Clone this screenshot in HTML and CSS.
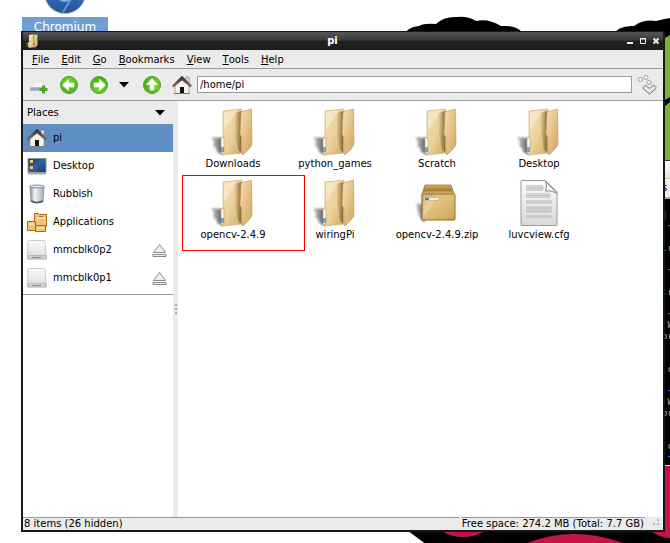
FILE: index.html
```
<!DOCTYPE html>
<html lang="en">
<head>
  <meta charset="UTF-8" />
  <meta name="viewport" content="width=device-width, initial-scale=1.0" />
  <title>pi</title>
  <link rel="stylesheet" href="styles.css">
</head>
<body>
  <!-- shared icons -->
  <svg class="defs" aria-hidden="true">
    <defs>
      <linearGradient id="gold" x1="0" y1="0" x2="1" y2="1"><stop offset="0" stop-color="#f7e0b0"/><stop offset=".55" stop-color="#ecd099"/><stop offset="1" stop-color="#d0a865"/></linearGradient>
      <linearGradient id="flap" x1="0" y1="0" x2="1" y2="1"><stop offset="0" stop-color="#f8e0af"/><stop offset="1" stop-color="#d2a460"/></linearGradient>
      <linearGradient id="dark" x1="0" y1="0" x2="1" y2="0"><stop offset="0" stop-color="#9a7b48" stop-opacity="0"/><stop offset="1" stop-color="#765b31"/></linearGradient>
      <linearGradient id="shade" x1="0" y1="0" x2="1" y2="0"><stop offset="0" stop-color="#777" stop-opacity=".4"/><stop offset="1" stop-color="#555"/></linearGradient>
      <linearGradient id="box" x1="0" y1="0" x2="1" y2="1"><stop offset="0" stop-color="#d0ad64"/><stop offset=".4" stop-color="#e3c583"/><stop offset="1" stop-color="#c7a04e"/></linearGradient>
      <linearGradient id="lid" x1="0" y1="0" x2="0" y2="1"><stop offset="0" stop-color="#d9b566"/><stop offset=".15" stop-color="#a57c2e"/><stop offset=".26" stop-color="#dbbd7d"/></linearGradient>
      <linearGradient id="paper" x1="0" y1="0" x2="0" y2="1"><stop offset="0" stop-color="#fbfbfb"/><stop offset="1" stop-color="#d9d9d9"/></linearGradient>
      <linearGradient id="metal" x1="0" y1="0" x2="1" y2="0"><stop offset="0" stop-color="#8793a0"/><stop offset=".35" stop-color="#f4f6f8"/><stop offset="1" stop-color="#a3adb8"/></linearGradient>
      <linearGradient id="screen" x1="0" y1="0" x2="1" y2="1"><stop offset="0" stop-color="#163c6c"/><stop offset=".5" stop-color="#2d5f9b"/><stop offset="1" stop-color="#163c6c"/></linearGradient>
      <linearGradient id="roof" x1="0" y1="0" x2="0" y2="1"><stop offset="0" stop-color="#222"/><stop offset="1" stop-color="#a08572"/></linearGradient>
      <radialGradient id="green" cx=".5" cy=".3" r=".7"><stop offset="0" stop-color="#7fd42f"/><stop offset="1" stop-color="#45b015"/></radialGradient>
      <linearGradient id="blue" x1="0" y1="0" x2="0" y2="1"><stop offset="0" stop-color="#4c84cc"/><stop offset="1" stop-color="#245299"/></linearGradient>
      <filter id="soft"><feGaussianBlur stdDeviation="1"/></filter>
    </defs>
    <symbol id="folder" viewBox="0 0 48 48">
      <path d="M2 29l12 1v17L8 44l-1-4-3-2 1-4z" fill="url(#shade)" filter="url(#soft)"/>
      <path d="M14 3L33 1v44l-20 2-1-16 2-3z" fill="url(#gold)" stroke="#c7a46a" stroke-width=".6"/>
      <path d="M15 4l13-2-13 21z" fill="#fff" opacity=".35"/>
      <path d="M25 6q2-2 7-3v41q-4-1-4-8l-2-9z" fill="url(#dark)" opacity=".85"/>
      <path d="M32 4L42.500 1l.5 34q0 3-3 6l-6 6-1-1V30l-2-4z" fill="url(#flap)" stroke="#c1934f" stroke-width=".6"/>
      <rect x="12" y="30" width="3" height="15" fill="#f5f5f5" stroke="#b79c6c" stroke-width=".5"/>
      <rect x="12" y="39" width="3" height="5" fill="#6fa2d9"/>
    </symbol>
    <symbol id="zip" viewBox="0 0 48 48">
      <path d="M3 24l9 2v17l-4-2-3-8z" fill="url(#shade)" filter="url(#soft)"/>
      <path d="M12 6h26l3 9v25H9V15z" fill="url(#lid)" stroke="#8d6c2d" stroke-width=".7"/>
      <rect x="9" y="15" width="33" height="26" rx="1" fill="url(#box)" stroke="#94712b"/>
      <path d="M12 18h13L11 36z" fill="#fff" opacity=".25"/>
      <rect x="11" y="18.500" width="15" height="3" rx="1" fill="#f3f0e8" stroke="#b59a5d" stroke-width=".5"/>
      <path d="M12 20h4" stroke="#3b82cf" stroke-width="2"/>
    </symbol>
    <symbol id="file" viewBox="0 0 48 48">
      <path d="M7 1.500h23l12 11v33q0 1-1 1H7q-1 0-1-1v-43q0-1 1-1z" fill="url(#paper)" stroke="#999"/>
      <path d="M11 6h17v6H11zM11 14h24v5H11zM11 21h26v4H11zM11 27h26v7H11zM11 36h26v3H11z" fill="#ccc" opacity=".8"/>
      <path d="M11 9h18M11 16.500h25M11 23h24M11 29h25M11 32h23M11 38h25" stroke="#c2c2c2"/>
      <path d="M30.500 2q2 5 0 10 5-1 11 2z" fill="#f8f8f8" stroke="#888"/>
    </symbol>
    <symbol id="home" viewBox="0 0 20 20">
      <path d="M14 2h3v7h-3z" fill="#e8e1dc" stroke="#85776e" stroke-width=".6"/>
      <path d="M3 10l7-6 7 6v8.500H3z" fill="#f7f3ef" stroke="#8b827b" stroke-width=".7"/>
      <path d="M10 1L.5 10.500l1 1.500L10 5l8.500 7 1-1.500z" fill="url(#roof)" stroke="#4a3d35" stroke-width=".6"/>
      <path d="M8 12h4v6.500H8z" fill="#17120f"/>
      <path d="M2 18.500h16" stroke="#81776f"/>
    </symbol>
    <symbol id="arrow" viewBox="0 0 20 20">
      <circle cx="10" cy="10" r="8.500" fill="url(#green)" stroke="#4aa324"/>
      <path d="M3.500 10L9.500 4.500v3.500H15v4H9.500v3.500z" fill="#fff" stroke="#e6f7da" stroke-width=".8"/>
    </symbol>
    <symbol id="drive" viewBox="0 0 20 20">
      <path d="M2 .5h15q1 0 1 1L19.500 17v2H.5V15l.5-13.500q0-1 1-1z" fill="url(#paper)" stroke="#c0c0c0" stroke-width=".8"/>
      <path d="M1 15.500h18v3.500H1z" fill="#d0d0d0" stroke="#a8a8a8" stroke-width=".6"/>
      <path d="M5 17.500h9" stroke="#888"/>
    </symbol>
    <symbol id="eject" viewBox="0 0 15 15">
      <path d="M7.500 1.500L1.500 9.500h12z" fill="#eee" stroke="#8c8c8c"/>
      <path d="M1 11.500h13v2H1z" fill="#eee" stroke="#8c8c8c"/>
    </symbol>
  </svg>

  <!-- desktop wallpaper -->
  <svg class="wallpaper" viewBox="0 0 670 543" preserveAspectRatio="xMaxYMin slice" aria-hidden="true">
    <path d="M403 36q4-9 16-10 5-3 17-2 8-8 22-7 9-1 18 4 12-3 25 5 15-1 21 6v8H403zM612 36q6-11 22-10 10-7 22-5 8-2 14-3v150h-58z"/>
    <path d="M665 38l5-3v62l-5 3zM665 106l5-4v60h-5z" fill="#7bb32e"/>
    <path d="M404 528q11 8 23 17h243v-80h-10v67z"/>
    <path d="M665 466h5v72q-10 0-19-7h14zM441 531h44q-22 12-44 0zM522 545q52-22 106 0z" fill="#c51448"/>
  </svg>

  <div class="launcher">
    <svg class="launcher-icon" viewBox="0 0 42 42" aria-hidden="true">
      <circle cx="21" cy="21" r="20.500" fill="url(#blue)" stroke="#9db9dd"/>
      <circle cx="21" cy="21" r="9" fill="#83aee5"/>
      <path d="M27 27l-8 13" stroke="#6597d7" stroke-width="2"/>
    </svg>
    <span class="launcher-name">Chromium</span>
  </div>

  <!-- terminal behind the file manager -->
  <div class="terminal">
    <div class="terminal-title"></div>
    <div class="terminal-menu">s</div>
    <pre class="terminal-text">
|
 <b>~</b>

.r
 
 <b>~</b>

.r

 <b>~</b>
 W
or


 c

 <b>~</b>
 W
or


 c
 <b>~</b></pre>
  </div>

  <main class="window">
    <header class="titlebar">
      <svg class="title-icon" aria-hidden="true"><use href="#folder"/></svg>
      <h1>pi</h1>
      <div class="controls">
        <button aria-label="Minimise"><svg viewBox="0 0 8 8"><path d="M1 6h6" stroke="#eee" stroke-width="2"/></svg></button>
        <button aria-label="Maximise"><svg viewBox="0 0 8 8"><path d="M1.500 1.500h5v5h-5zM1 2h6" fill="none" stroke="#eee"/></svg></button>
        <button aria-label="Close"><svg viewBox="0 0 8 8"><path d="M1.500 1.500l5 5M6.500 1.500l-5 5" stroke="#eee" stroke-width="2"/></svg></button>
      </div>
    </header>

    <nav class="menubar">
      <button><u>F</u>ile</button>
      <button><u>E</u>dit</button>
      <button><u>G</u>o</button>
      <button><u>B</u>ookmarks</button>
      <button><u>V</u>iew</button>
      <button><u>T</u>ools</button>
      <button><u>H</u>elp</button>
    </nav>

    <div class="toolbar">
      <button aria-label="New tab">
        <svg class="icon" viewBox="0 0 20 20"><path d="M4 7h10l2 6H2z" fill="#f3f5f8" stroke="#d2d6dc" stroke-width=".6"/><path d="M1 12h16v4H1z" fill="#b1bac8"/><path d="M1 14h12" stroke="#8e99aa"/><path d="M14.500 10.500v8M10.500 14.500h8" stroke="#4fa52b" stroke-width="3"/></svg>
      </button>
      <button aria-label="Back"><svg class="icon"><use href="#arrow"/></svg></button>
      <button aria-label="Forward"><svg class="icon right"><use href="#arrow"/></svg></button>
      <button class="history" aria-label="History"><svg viewBox="0 0 10 6"><path d="M0 0h10L5 5.500z"/></svg></button>
      <button aria-label="Up"><svg class="icon up"><use href="#arrow"/></svg></button>
      <button aria-label="Home"><svg class="icon"><use href="#home"/></svg></button>
      <input class="path" type="text" value="/home/pi" aria-label="Location">
      <button aria-label="Go to location">
        <svg class="icon" viewBox="0 0 20 20"><g fill="#fff" stroke="#999"><circle cx="3.500" cy="4.500" r="2"/><circle cx="9" cy="2.500" r="2"/><circle cx="12" cy="7.500" r="2"/></g><path d="M6 12.500l2.500-2.500 4 3.500 4-3.500L19 12.500v1l-6.500 5.500L6 13.500z" fill="#ddd" stroke="#777"/><path d="M8 12.500l4.500 3.500 4.500-3.500" stroke="#fff" fill="none"/></svg>
      </button>
    </div>

    <div class="content">
      <aside class="sidebar">
        <button class="places-head">Places <svg viewBox="0 0 10 6"><path d="M0 0h10L5 5.500z"/></svg></button>
        <ul class="places">
          <li class="selected"><svg class="icon"><use href="#home"/></svg><a href="#pi">pi</a></li>
          <li>
            <svg class="icon" viewBox="0 0 20 20"><path d="M1 2.500h18v14H1z" fill="url(#screen)" stroke="#8b9299"/><path d="M1 17.500h18" stroke="#aaa" stroke-width="2"/><path d="M3 4h3v3H3zM3 10h3v3H3z" fill="#f2c36c"/></svg>
            <a href="#desktop">Desktop</a>
          </li>
          <li>
            <svg class="icon" viewBox="0 0 20 20"><path d="M3 2.500l1 15q6 3 12 0l1-15z" fill="url(#metal)" stroke="#73808e" stroke-width=".7"/><ellipse cx="10" cy="2.500" rx="7.500" ry="1.500" fill="#dce1e6" stroke="#6f7c8a" stroke-width=".8"/><path d="M4 17q6 3 12 0" fill="none" stroke="#44566b" stroke-width="1.500"/></svg>
            <a href="#rubbish">Rubbish</a>
          </li>
          <li>
            <svg class="icon" viewBox="0 0 20 20"><g fill="#eec277" stroke="#a9680e"><path d="M7.500 1.500h4l1 1h7v12h-12z"/><path d="M12 4.500h4"/><path d="M.5 9.500h8v9h-8z"/><path d="M8.500 13.500h10v6h-10z"/></g><path d="M2 12h5M10 16h7M10 6h8" stroke="#fff4d8"/></svg>
            <a href="#applications">Applications</a>
          </li>
          <li><svg class="icon"><use href="#drive"/></svg><a href="#p2">mmcblk0p2</a><button aria-label="Eject mmcblk0p2"><svg class="eject"><use href="#eject"/></svg></button></li>
          <li><svg class="icon"><use href="#drive"/></svg><a href="#p1">mmcblk0p1</a><button aria-label="Eject mmcblk0p1"><svg class="eject"><use href="#eject"/></svg></button></li>
        </ul>
      </aside>
      <div class="splitter"><i></i><i></i><i></i></div>
      <section class="files">
        <a class="item" href="#downloads"><svg><use href="#folder"/></svg>Downloads</a>
        <a class="item" href="#python"><svg><use href="#folder"/></svg>python_games</a>
        <a class="item" href="#scratch"><svg><use href="#folder"/></svg>Scratch</a>
        <a class="item" href="#desk"><svg><use href="#folder"/></svg>Desktop</a>
        <a class="item marked" href="#opencv"><svg><use href="#folder"/></svg>opencv-2.4.9</a>
        <a class="item" href="#wiring"><svg><use href="#folder"/></svg>wiringPi</a>
        <a class="item" href="#zipfile"><svg><use href="#zip"/></svg>opencv-2.4.9.zip</a>
        <a class="item" href="#cfg"><svg><use href="#file"/></svg>luvcview.cfg</a>
      </section>
    </div>

    <footer class="statusbar">
      <span class="count">8 items (26 hidden)</span>
      <span class="space">Free space: 274.2 MB (Total: 7.7 GB)</span>
      <svg class="grip" viewBox="0 0 12 12"><path d="M8 2h2v2H8zM4 6h2v2H4zM8 6h2v2H8z" fill="#bbb"/></svg>
    </footer>
  </main>
</body>
</html>
```
FILE: styles.css
```
* {
  box-sizing: border-box;
}
body {
  margin: 0;
  height: 100vh;
  position: relative;
  overflow: hidden;
  background: #fff;
  color: #000;
  font-family: "DejaVu Sans", sans-serif;
  font-size: 10px;
  line-height: 12px;
}
button {
  display: flex;
  align-items: center;
  padding: 0;
  border: 0;
  background: none;
  color: inherit;
  font: inherit;
}
a {
  color: inherit;
  text-decoration: none;
}
svg {
  display: block;
  flex: none;
}
.defs {
  position: absolute;
  width: 0;
  height: 0;
}
.icon {
  width: 20px;
  height: 20px;
}

/* desktop */
.wallpaper {
  position: absolute;
  top: 0;
  left: 0;
  width: 100%;
  height: 100%;
}
.launcher {
  position: absolute;
  top: -28px;
  left: 22px;
  width: 86px;
  display: flex;
  flex-direction: column;
  align-items: center;
  gap: 3px;
}
.launcher-icon {
  width: 42px;
  height: 42px;
}
.launcher-name {
  width: 100%;
  background: #729fd3;
  color: #fff;
  font-size: 12px;
  line-height: 20px;
  text-align: center;
}
.terminal {
  position: absolute;
  top: 160px;
  right: 0;
  width: 8px;
  height: 306px;
  overflow: hidden;
  background: #000;
  border-bottom: 1px solid #ddd;
}
.terminal-title {
  height: 19px;
  background: linear-gradient(#fff, #e4e4dc);
  border-top: 1px solid #333;
  border-bottom: 1px solid #c9c9b4;
}
.terminal-menu {
  height: 20px;
  background: #eee;
  border-bottom: 2px solid #aaa;
  line-height: 18px;
}
.terminal-text {
  margin: 11px 0 0;
  color: #bbb;
  font-family: "DejaVu Sans Mono", monospace;
  font-size: 9px;
  line-height: 11px;
}
.terminal-text b {
  color: #5555ff;
}

/* file manager */
.window {
  position: absolute;
  top: 31px;
  right: 5px;
  bottom: 11px;
  left: 21px;
  display: flex;
  flex-direction: column;
  background: #ebebeb;
  border: 2px solid #16191c;
  border-top-width: 1px;
}
.titlebar {
  display: flex;
  align-items: center;
  height: 18px;
  padding: 0 3px 0 2px;
  background: linear-gradient(#555, #393939 45%, #202020 50%, #1c1c1c);
  color: #fff;
}
.title-icon {
  width: 14px;
  height: 14px;
}
.titlebar h1 {
  flex: 1;
  margin: 0;
  font-size: 10px;
  text-align: center;
}
.controls {
  display: flex;
  gap: 5px;
}
.controls svg {
  width: 8px;
  height: 8px;
}
.menubar {
  display: flex;
  align-items: center;
  gap: 12px;
  height: 19px;
  padding: 2px 0 0 9px;
  border-bottom: 1px solid #999;
}
.menubar u {
  text-underline-offset: 1px;
}
.toolbar {
  display: flex;
  align-items: center;
  gap: 10px;
  height: 32px;
  padding: 0 6px;
  border-bottom: 1px solid #999;
}
.history {
  width: 13px;
}
.history svg,
.places-head svg {
  width: 10px;
  height: 6px;
}
.right {
  transform: rotate(180deg);
}
.up {
  transform: rotate(90deg);
}
.path {
  flex: 1;
  min-width: 0;
  height: 17px;
  margin: 0 -5px;
  padding: 0 2px;
  border: 1px solid #999;
  background: #fff;
  font: inherit;
}
.content {
  flex: 1;
  display: flex;
  min-height: 0;
}
.sidebar {
  width: 150px;
  background: #fff;
}
.places-head {
  justify-content: space-between;
  width: 100%;
  height: 23px;
  padding: 0 8px 0 4px;
  background: #ebebeb;
}
.places {
  margin: 0;
  padding: 0 0 2px;
  list-style: none;
  border-bottom: 1px solid #999;
}
.places li {
  display: flex;
  align-items: center;
  gap: 6px;
  height: 28px;
  padding: 0 6px 0 4px;
}
.places a {
  flex: 1;
}
.places .selected {
  background: #5f8ec4;
}
.eject {
  width: 15px;
  height: 15px;
}
.splitter {
  display: flex;
  flex-direction: column;
  align-items: center;
  justify-content: center;
  gap: 2px;
  width: 5px;
}
.splitter i {
  width: 2px;
  height: 2px;
  background: #aaa;
}
.files {
  flex: 1;
  display: grid;
  grid-template-columns: repeat(auto-fill, 102px);
  grid-auto-rows: 71px;
  align-content: start;
  padding: 7px 0 0 4px;
  background: #fff;
}
.item {
  position: relative;
  display: flex;
  flex-direction: column;
  align-items: center;
  gap: 2px;
}
.item svg {
  width: 48px;
  height: 48px;
}
.marked::after {
  content: "";
  box-sizing: border-box;
  position: absolute;
  top: -4px;
  left: 0;
  width: 123px;
  height: 76px;
  border: 1px solid #f00;
}
.statusbar {
  display: flex;
  gap: 2px;
  height: 13px;
}
.statusbar span {
  padding: 0 1px;
  border-top: 1px solid #999;
}
.count {
  flex: 1;
}
.grip {
  width: 12px;
  height: 12px;
  margin: 0 2px;
}
```
